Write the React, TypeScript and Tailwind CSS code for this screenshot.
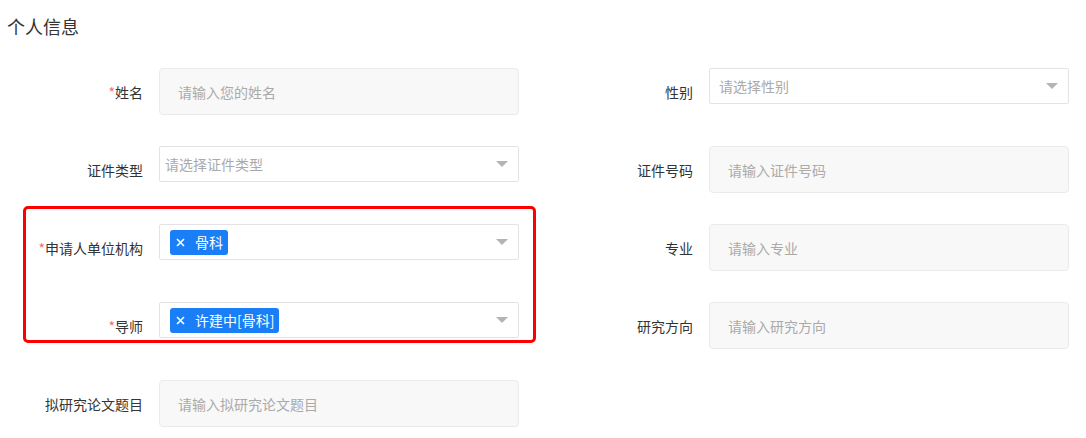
import type { ReactNode } from 'react';

type RowProps = {
  label: string;
  required?: boolean;
  children: ReactNode;
};

function Row({ label, required, children }: RowProps) {
  return (
    <div className="flex h-[47px] items-start">
      <label className="flex h-[47px] w-[143px] shrink-0 items-center justify-end pt-[2px] text-[14px] text-[#333]">
        {required && <span className="text-[#f56c6c]">*</span>}
        {label}
      </label>
      <div className="ml-[16px]">{children}</div>
    </div>
  );
}

function TextInput({ placeholder }: { placeholder: string }) {
  return (
    <div className="flex h-[47px] w-[360px] items-center rounded-[4px] border border-[#ebebeb] bg-[#f8f8f8] pl-[18px] pt-[2px] text-[14px] text-[#aaa]">
      {placeholder}
    </div>
  );
}

function Caret() {
  return (
    <svg width="12" height="6" viewBox="0 0 12 6" className="shrink-0">
      <path d="M0 0h12L6 6z" fill="#b4b4b4" />
    </svg>
  );
}

function Select({ placeholder, wide }: { placeholder: string; wide?: boolean }) {
  return (
    <div
      className={
        wide
          ? 'flex h-[36px] w-[360px] items-center justify-between rounded-[2px] border border-[#e3e3e3] bg-white pl-[9px] pr-[10px] text-[14px] text-[#aaa]'
          : 'flex h-[36px] w-[360px] items-center justify-between rounded-[2px] border border-[#e3e3e3] bg-white pl-[5px] pr-[10px] text-[14px] text-[#aaa]'
      }
    >
      <span>{placeholder}</span>
      <Caret />
    </div>
  );
}

function TagSelect({ tag }: { tag: string }) {
  return (
    <div className="flex h-[36px] w-[360px] items-center justify-between rounded-[2px] border border-[#e3e3e3] bg-white pl-[10px] pr-[10px]">
      <span className="flex h-[25px] items-center gap-[10px] rounded-[3px] bg-[#1a7ef7] pl-[6px] pr-[5px] text-[14px] text-white">
        <svg width="9" height="9" viewBox="0 0 9 9">
          <path d="M1 1l7 7M8 1L1 8" stroke="#fff" strokeWidth="1.6" />
        </svg>
        {tag}
      </span>
      <Caret />
    </div>
  );
}

export default function App() {
  return (
    <div className="h-[438px] w-[1086px] overflow-hidden bg-white font-['Noto_Sans_CJK_SC',sans-serif]">
      <h2 className="pl-[7px] pt-[17px] text-[18px] leading-[18px] text-[#333]">个人信息</h2>

      <div className="mt-[33px] flex gap-[32px]">
        <div className="relative flex w-[518px] flex-col gap-[31px]">
          <Row label="姓名" required>
            <TextInput placeholder="请输入您的姓名" />
          </Row>
          <Row label="证件类型">
            <Select placeholder="请选择证件类型" />
          </Row>
          <Row label="申请人单位机构" required>
            <TagSelect tag="骨科" />
          </Row>
          <Row label="导师" required>
            <TagSelect tag="许建中[骨科]" />
          </Row>
          <Row label="拟研究论文题目">
            <TextInput placeholder="请输入拟研究论文题目" />
          </Row>

          {/* highlight annotation */}
          <div className="pointer-events-none absolute left-[23px] top-[138px] h-[137px] w-[513px] rounded-[5px] border-[3px] border-[#ff0000]" />
        </div>

        <div className="flex w-[519px] flex-col gap-[31px]">
          <Row label="性别">
            <Select placeholder="请选择性别" wide />
          </Row>
          <Row label="证件号码">
            <TextInput placeholder="请输入证件号码" />
          </Row>
          <Row label="专业">
            <TextInput placeholder="请输入专业" />
          </Row>
          <Row label="研究方向">
            <TextInput placeholder="请输入研究方向" />
          </Row>
        </div>
      </div>
    </div>
  );
}
